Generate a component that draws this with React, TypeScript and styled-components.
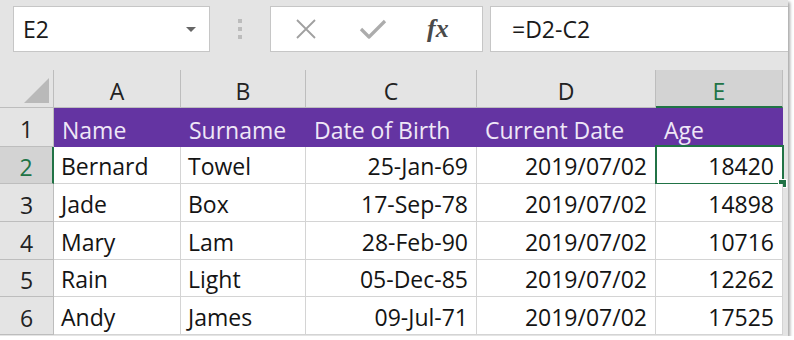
import styled, { createGlobalStyle } from 'styled-components'

const GREEN = '#217346'
const PURPLE = '#6434a2'

const columns = ['A', 'B', 'C', 'D', 'E']
const heads = ['Name', 'Surname', 'Date of Birth', 'Current Date', 'Age']
const rows = [
  ['Bernard', 'Towel', '25-Jan-69', '2019/07/02', '18420'],
  ['Jade', 'Box', '17-Sep-78', '2019/07/02', '14898'],
  ['Mary', 'Lam', '28-Feb-90', '2019/07/02', '10716'],
  ['Rain', 'Light', '05-Dec-85', '2019/07/02', '12262'],
  ['Andy', 'James', '09-Jul-71', '2019/07/02', '17525'],
]
// text columns left, dates and numbers right
const rightAligned = [false, false, true, true, true]

export default function App () {
  return (
    <>
      <GlobalStyle />
      <Frame>
        <FormulaBar>
          <NameBox>
            E2
            <Caret />
          </NameBox>
          <Grip>
            <span /><span /><span />
          </Grip>
          <ButtonsBox>
            <svg width="22" height="20" viewBox="0 0 22 20">
              <path d="M2 1 L20 19 M20 1 L2 19" stroke="#a0a0a0" strokeWidth="1.8" fill="none" />
            </svg>
            <svg width="28" height="22" viewBox="0 0 28 22">
              <path d="M2 11 L10 19 L26 3" stroke="#acacac" strokeWidth="3.2" fill="none" strokeLinejoin="round" />
            </svg>
            <Fx>fx</Fx>
          </ButtonsBox>
          <FormulaInput>=D2-C2</FormulaInput>
        </FormulaBar>

        <Grid>
          <Corner>
            <svg width="25" height="25" viewBox="0 0 25 25">
              <polygon points="25,0 25,25 0,25" fill="#b9b9b9" />
            </svg>
          </Corner>
          {columns.map((c) => (
            <ColHead key={c} $active={c === 'E'}>{c}</ColHead>
          ))}
          <Edge />

          <RowHead>1</RowHead>
          {heads.map((h) => (
            <HeadCell key={h}>{h}</HeadCell>
          ))}
          <Edge />

          {rows.map((r, i) => (
            <RowGroup key={i} row={r} index={i + 2} />
          ))}
        </Grid>
      </Frame>
    </>
  )
}

function RowGroup ({ row, index }: { row: string[]; index: number }) {
  const active = index === 2
  return (
    <>
      <RowHead $active={active}>{index}</RowHead>
      {row.map((v, j) => (
        <Cell key={j} $right={rightAligned[j]}>
          {v}
          {active && j === 4 && (
            <Selection>
              <Handle />
            </Selection>
          )}
        </Cell>
      ))}
      <Edge />
    </>
  )
}

const GlobalStyle = createGlobalStyle`
  body {
    margin: 0;
    background: #ffffff;
    font-family: "Open Sans", "Liberation Sans", sans-serif;
  }
`

const Frame = styled.div`
  width: 788px;
  height: 336px;
  background: #e4e4e4;
  box-shadow: 2px 2px 3px rgba(0, 0, 0, 0.35);
  overflow: hidden;
`

const FormulaBar = styled.div`
  display: flex;
  align-items: stretch;
  height: 46px;
  margin-top: 6px;
  padding-left: 13px;
`

const NameBox = styled.div`
  width: 197px;
  box-sizing: border-box;
  background: #fff;
  border: 1px solid #c6c6c6;
  display: flex;
  align-items: center;
  padding-left: 9px;
  font-size: 23px;
  color: #1a1a1a;
`

const Caret = styled.span`
  margin-left: auto;
  margin-right: 13px;
  width: 0;
  height: 0;
  border-left: 5px solid transparent;
  border-right: 5px solid transparent;
  border-top: 5px solid #666;
`

const Grip = styled.div`
  width: 60px;
  display: flex;
  flex-direction: column;
  align-items: center;
  justify-content: center;
  gap: 4px;

  span {
    width: 4px;
    height: 4px;
    background: #bcbcbc;
  }
`

const ButtonsBox = styled.div`
  width: 213px;
  box-sizing: border-box;
  background: #fff;
  border: 1px solid #c6c6c6;
  display: flex;
  align-items: center;
  padding-left: 24px;
  gap: 42px;
`

const Fx = styled.span`
  font-family: "Liberation Serif", serif;
  font-style: italic;
  font-weight: bold;
  font-size: 26px;
  color: #4a4a4a;
  margin-left: -2px;
`

const FormulaInput = styled.div`
  margin-left: 7px;
  flex: 1;
  box-sizing: border-box;
  background: #fff;
  border: 1px solid #c6c6c6;
  border-right: none;
  display: flex;
  align-items: center;
  padding-left: 21px;
  font-size: 23px;
  color: #1a1a1a;
`

const Grid = styled.div`
  display: grid;
  margin-top: 18px;
  grid-template-columns: 54px 127px 125px 171px 179px 127px 5px;
  grid-template-rows: 38px 39px 37px 38px 38px 37px 38px;
  font-size: 23px;
  color: #141414;
`

const Corner = styled.div`
  box-sizing: border-box;
  border-right: 1px solid #bdbdbd;
  border-bottom: 1px solid #bdbdbd;
  display: flex;
  align-items: flex-end;
  justify-content: flex-end;
  padding: 0 4px 4px 0;
`

const ColHead = styled.div<{ $active?: boolean }>`
  box-sizing: border-box;
  display: flex;
  align-items: center;
  justify-content: center;
  padding-top: 5px;
  background: ${(p) => (p.$active ? '#d3d3d3' : '#e4e4e4')};
  color: ${(p) => (p.$active ? GREEN : '#222')};
  border-right: 1px solid #bdbdbd;
  border-bottom: ${(p) => (p.$active ? `2px solid ${GREEN}` : '1px solid #bdbdbd')};
`

const RowHead = styled.div<{ $active?: boolean }>`
  box-sizing: border-box;
  display: flex;
  align-items: center;
  justify-content: center;
  padding-top: 4px;
  background: ${(p) => (p.$active ? '#d3d3d3' : '#e4e4e4')};
  color: ${(p) => (p.$active ? GREEN : '#222')};
  border-bottom: 1px solid #bdbdbd;
  border-right: ${(p) => (p.$active ? `2px solid ${GREEN}` : '1px solid #bdbdbd')};
`

const HeadCell = styled.div`
  box-sizing: border-box;
  background: ${PURPLE};
  color: #efe7f7;
  display: flex;
  align-items: flex-end;
  padding: 0 0 1px 8px;
  white-space: nowrap;
`

const Cell = styled.div<{ $right?: boolean }>`
  position: relative;
  box-sizing: border-box;
  background: #fff;
  border-right: 1px solid #d4d4d4;
  border-bottom: 1px solid #d4d4d4;
  display: flex;
  align-items: flex-end;
  justify-content: ${(p) => (p.$right ? 'flex-end' : 'flex-start')};
  padding: ${(p) => (p.$right ? '0 8px 1px 0' : '0 0 1px 7px')};
  white-space: nowrap;
`

const Edge = styled.div`
  background: #e4e4e4;
`

const Selection = styled.div`
  position: absolute;
  left: -1px;
  top: -2px;
  right: -2px;
  bottom: -2px;
  border: 2px solid ${GREEN};
`

const Handle = styled.div`
  position: absolute;
  right: -5px;
  bottom: -5px;
  width: 7px;
  height: 7px;
  background: ${GREEN};
  border: 1px solid #fff;
`
